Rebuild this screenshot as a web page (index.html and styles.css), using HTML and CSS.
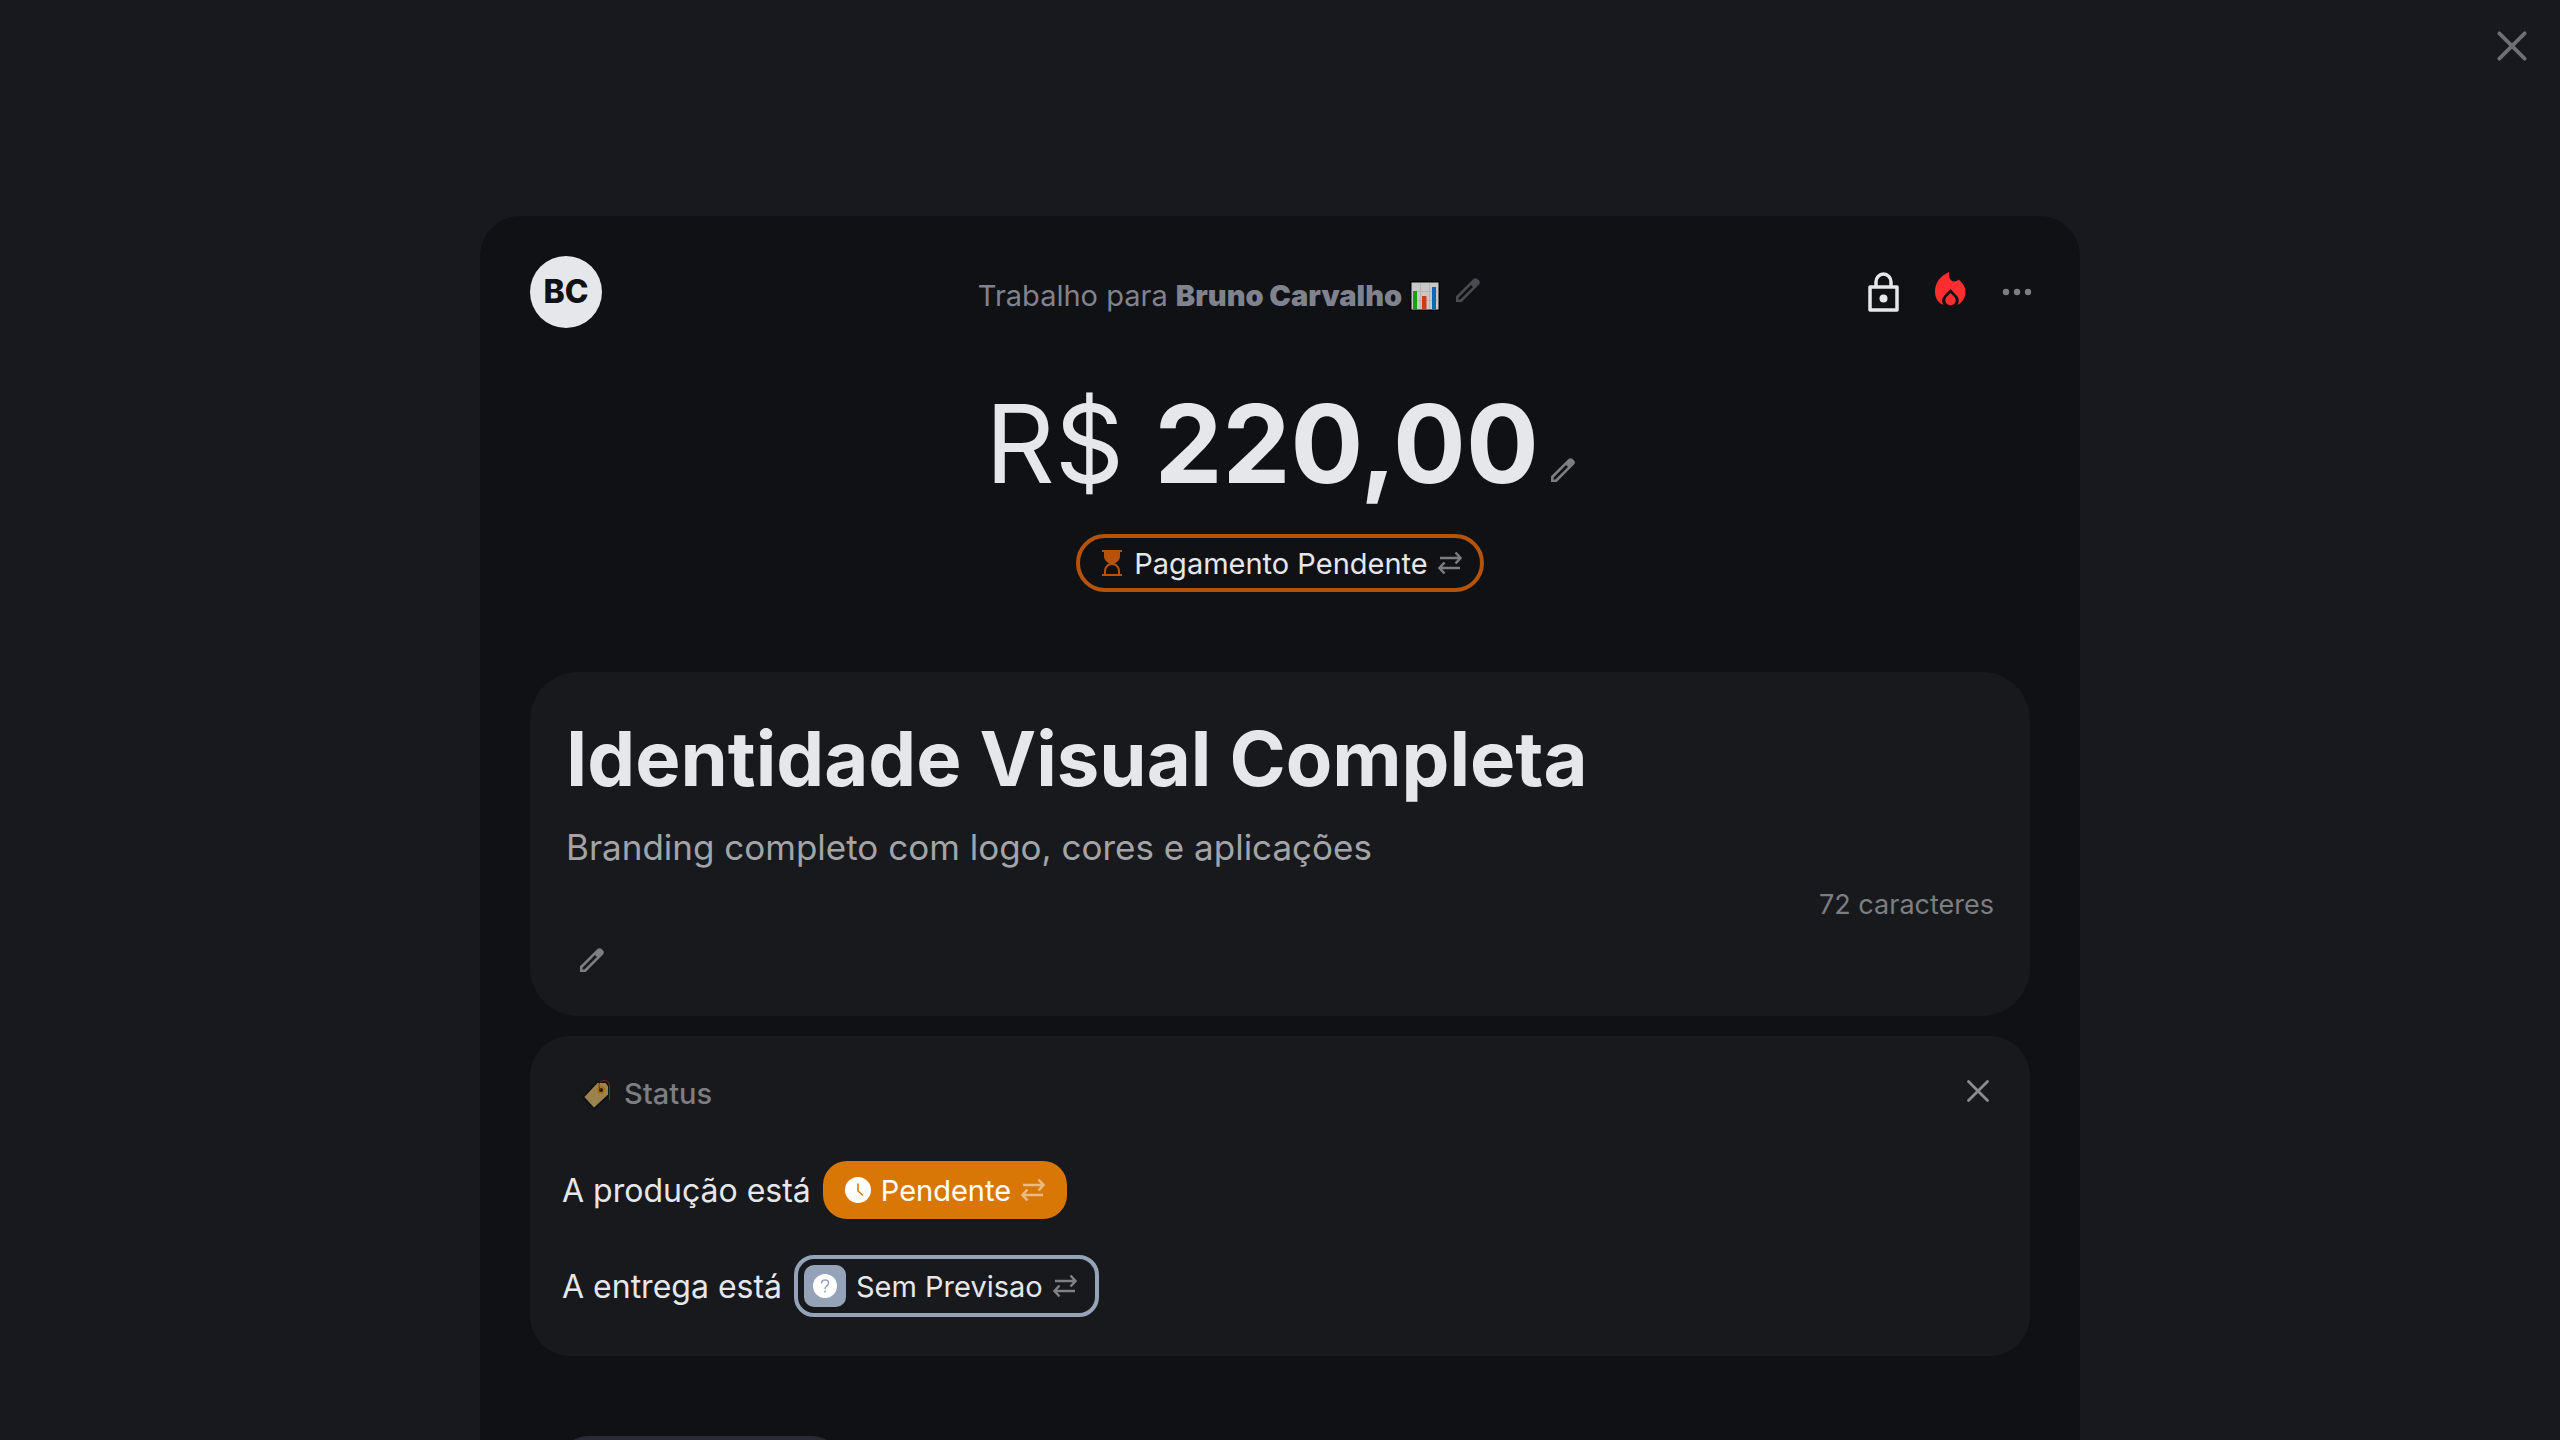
FILE: index.html
```html
<!DOCTYPE html>
<html lang="pt-BR">
<head>
  <meta charset="UTF-8" />
  <meta name="viewport" content="width=device-width, initial-scale=1.0"/>
  <title>Identidade Visual Completa</title>
  <link rel="stylesheet" href="styles.css">
</head>
<body>
  <!-- Shared icons -->
  <svg class="icon-defs" aria-hidden="true">
    <symbol id="icon-pencil" viewBox="0 0 24 24">
      <path fill="currentColor" fill-rule="evenodd" d="M0 24V18.300L17.500 1Q19.500 -.7 21.500 1L23 2.500Q24.700 4.500 23 6.500L5.700 24Z M2.500 21.500H4.300L17 9L15 7L2.500 19.700Z"/>
    </symbol>
    <symbol id="icon-swap" viewBox="0 0 24 24">
      <path fill="none" stroke="currentColor" stroke-width="2.500" d="M2 7H22 M17.500 1.500L22.500 7L17.500 12.500 M22 17H2 M6.500 11.500L1.500 17L6.500 22.500"/>
    </symbol>
    <symbol id="icon-x" viewBox="0 0 24 24">
      <path fill="none" stroke="currentColor" stroke-width="2.800" stroke-linecap="round" d="M2.500 2.500L21.500 21.500M21.500 2.500L2.500 21.500"/>
    </symbol>
  </svg>

  <button class="page-close" aria-label="Fechar"><svg><use href="#icon-x"/></svg></button>

  <main class="modal">
    <!-- Header -->
    <header class="modal-header">
      <div class="avatar">BC</div>
      <div class="client">
        <p>Trabalho para <strong>Bruno Carvalho</strong></p>
        <svg class="chart" viewBox="0 0 30 30">
          <path d="M0 0H30V30H0Z"/>
          <path fill="#c8c8c8" d="M1.500 1.500H28.500V28.500H1.500Z"/>
          <path stroke="#b4b4b4" d="M1.500 10.500H28.500M1.500 19.500H28.500M10.500 2V28M19.500 2V28"/>
          <path fill="#13a10e" d="M3 10H7V28.500H3Z"/>
          <path fill="#d03a1c" d="M12 15H16.500V28.500H12Z"/>
          <path fill="#0b68b8" d="M22 6H26V28.500H22Z"/>
        </svg>
        <button class="icon-button edit-client" aria-label="Editar cliente"><svg><use href="#icon-pencil"/></svg></button>
      </div>
      <div class="actions">
        <button class="icon-button lock" aria-label="Bloquear">
          <svg viewBox="0 0 31 40">
            <path fill="none" stroke="currentColor" stroke-width="3.500" stroke-linejoin="round" d="M2 15H29V38H2Z M8 15V10A7.500 8 0 0 1 23 10V15"/>
            <circle cx="15.500" cy="26.500" r="4" fill="currentColor"/>
          </svg>
        </button>
        <button class="icon-button fire" aria-label="Urgente">
          <svg viewBox="0 0 31 40">
            <path fill="currentColor" d="M14 0C14 3 14 9 19 9.500C21 9.700 23 8.500 23.500 7.500C28 11 30.500 15 30.500 20C30.500 26 27 31 22.500 33C24.500 29 24 26.500 22 24L15.500 17L9 24C6.500 27 6.500 30 8.500 33C3 31 0 26 0 19.500C0 11 5 4 14 0Z"/>
            <path fill="currentColor" d="M15.500 21L19.500 25C21 27 21 29 20 31A5.500 5.500 0 0 1 11 31C10 29 10 27 11.500 25Z"/>
          </svg>
        </button>
        <button class="icon-button more" aria-label="Mais opções">
          <svg viewBox="0 0 30 8" fill="currentColor"><circle cx="4" cy="4" r="3.200"/><circle cx="15" cy="4" r="3.200"/><circle cx="26" cy="4" r="3.200"/></svg>
        </button>
      </div>
    </header>

    <!-- Amount and payment state -->
    <section class="amount">
      <h1>R$ <strong>220,00</strong></h1>
      <button class="icon-button edit-amount" aria-label="Editar valor"><svg><use href="#icon-pencil"/></svg></button>
    </section>
    <div class="payment">
      <button class="pill pill-payment">
        <svg class="hourglass" viewBox="-2 0 24 26">
          <path fill="currentColor" d="M0 0H20V2H18V6C18 10 15 12.500 12 14H8C5 12.500 2 10 2 6V2H0ZM0 24H20V26H0Z"/>
          <path fill="none" stroke="currentColor" stroke-width="2" d="M3 24V21C3 17 6 14 10 14C14 14 17 17 17 21V24"/>
        </svg>
        Pagamento Pendente
        <svg class="swap"><use href="#icon-swap"/></svg>
      </button>
    </div>

    <!-- Job description -->
    <section class="card card-job">
      <h2>Identidade Visual Completa</h2>
      <p class="description">Branding completo com logo, cores e aplicações</p>
      <p class="counter">72 caracteres</p>
      <button class="icon-button edit-job" aria-label="Editar descrição"><svg><use href="#icon-pencil"/></svg></button>
    </section>

    <!-- Status -->
    <section class="card card-status">
      <div class="status-header">
        <h3>
          <svg class="tag" viewBox="0 0 30 32">
            <path fill="#9b8250" stroke="#111214" stroke-width="2" d="M1 19L15 4L24 4L27 8V17L13 30Q12 31 11 30Z"/>
            <circle cx="19" cy="12" r="4" fill="#a8720f"/>
            <circle cx="19" cy="12" r="2" fill="#1a1a1a"/>
            <path fill="none" stroke="#7d2a1c" stroke-width="1" d="M19 12C15 8 17 3 22 2.500C26 2.500 27.500 5 27.500 9V22"/>
          </svg>
          Status
        </h3>
        <button class="icon-button status-close" aria-label="Fechar status"><svg><use href="#icon-x"/></svg></button>
      </div>
      <div class="status-row">
        <span>A produção está</span>
        <button class="pill pill-production">
          <svg class="clock" viewBox="0 0 26 26">
            <circle cx="13" cy="13" r="13" fill="currentColor"/>
            <path fill="none" stroke="#d97706" stroke-width="1.600" stroke-linecap="round" d="M13 7V14L17.500 18"/>
          </svg>
          Pendente
          <svg class="swap"><use href="#icon-swap"/></svg>
        </button>
      </div>
      <div class="status-row">
        <span>A entrega está</span>
        <button class="pill pill-delivery">
          <span class="question">
            <svg viewBox="0 0 24 24">
              <circle cx="12" cy="12" r="12" fill="#fff"/>
              <path fill="none" stroke="#94a3b8" stroke-width="1.500" d="M8.500 9.500C8.500 7 10 6 12 6C14 6 15.500 7 15.500 9C15.500 11.500 12 12 12 15M12 16.500V18.500"/>
            </svg>
          </span>
          Sem Previsao
          <svg class="swap"><use href="#icon-swap"/></svg>
        </button>
      </div>
    </section>

    <section class="next-section">
      <div class="next-tab"></div>
    </section>
  </main>
</body>
</html>
```
FILE: styles.css
```css
* {
  box-sizing: border-box;
  margin: 0;
  padding: 0;
}
body {
  background-color: #18191e;
  font-family: Inter, "Liberation Sans", sans-serif;
  color: #e5e7eb;
  height: 100vh;
  overflow: hidden;
}
button {
  background: none;
  border: none;
  color: inherit;
  font: inherit;
  cursor: pointer;
}
svg {
  display: block;
  flex-shrink: 0;
}
.icon-defs {
  display: none;
}
.icon-button {
  display: flex;
  align-items: center;
  justify-content: center;
  color: #7d7e82;
}
.icon-button svg {
  width: 24px;
  height: 24px;
}
/*
  Close button in the page corner
*/
.page-close {
  position: absolute;
  top: 30px;
  right: 32px;
  color: #6f7074;
}
.page-close svg {
  width: 32px;
  height: 32px;
}
.modal {
  width: 100%;
  max-width: 1600px;
  margin: 216px auto 0;
  padding: 40px 50px;
  background-color: #101115;
  border-radius: 40px;
}
/*
  Header
*/
.modal-header {
  display: flex;
  justify-content: space-between;
  align-items: center;
}
.avatar {
  width: 72px;
  height: 72px;
  border-radius: 50%;
  background-color: #e5e7eb;
  color: #101115;
  font-size: 32px;
  font-weight: 800;
  line-height: 72px;
  text-align: center;
}
.client {
  display: flex;
  align-items: center;
  gap: 8px;
  font-size: 29px;
  line-height: 40px;
  padding: 8px 12px 0 0;
  color: #80838e;
}
.client strong {
  font-weight: 900;
}
.chart {
  width: 30px;
  height: 30px;
}
.edit-client {
  margin: -12px 0 0 8px;
  color: #494b50;
}
.actions {
  display: flex;
  align-items: center;
  gap: 36px;
  margin-right: -2px;
}
.lock {
  color: #e5e7eb;
}
.lock svg,
.fire svg {
  width: 31px;
  height: 40px;
}
.fire {
  color: #ff2d2d;
}
.more svg {
  width: 30px;
  height: 8px;
}
/*
  Amount
*/
.amount {
  display: flex;
  justify-content: center;
  align-items: flex-end;
  gap: 12px;
  margin-top: 48px;
}
.amount h1 {
  font-size: 108px;
  font-weight: 400;
  line-height: 136px;
}
.amount h1 strong {
  font-weight: 700;
}
.edit-amount {
  margin-bottom: 30px;
}
.payment {
  display: flex;
  justify-content: center;
  margin-top: 22px;
}
.pill {
  display: flex;
  align-items: center;
  gap: 10px;
  height: 58px;
  padding: 0 22px;
  font-size: 29px;
  font-weight: 400;
  border-radius: 24px;
}
.swap {
  width: 24px;
  height: 24px;
  opacity: 0.5;
}
.pill-payment {
  border: 4px solid #b45309;
  border-radius: 29px;
  padding: 0 18px 0 20px;
}
.hourglass {
  width: 24px;
  height: 26px;
  color: #b45309;
}
/*
  Cards
*/
.card {
  background-color: #18191d;
}
.card-job {
  margin-top: 80px;
  padding: 36px;
  border-radius: 48px;
}
.card-job h2 {
  font-size: 76px;
  font-weight: 700;
  line-height: 100px;
}
.description {
  margin-top: 12px;
  font-size: 35px;
  line-height: 54px;
  color: #a3a4a7;
}
.counter {
  font-size: 27px;
  line-height: 62px;
  text-align: right;
  color: #7d7e82;
}
.edit-job {
  margin: 12px 0 8px 14px;
}
.card-status {
  margin-top: 20px;
  padding: 36px 32px 40px;
  border-radius: 40px;
}
.status-header {
  display: flex;
  justify-content: space-between;
  align-items: flex-start;
  padding: 0 8px 0 20px;
}
.status-header h3 {
  display: flex;
  align-items: center;
  gap: 12px;
  font-size: 29px;
  font-weight: 500;
  line-height: 44px;
  color: #7d7e82;
}
.tag {
  width: 30px;
  height: 32px;
}
.status-close {
  height: 38px;
  color: #8c8d90;
}
.status-row {
  display: flex;
  align-items: center;
  gap: 12px;
  height: 60px;
  margin-top: 36px;
  font-size: 32px;
}
.status-header + .status-row {
  margin-top: 44px;
}
.pill-production {
  background-color: #d97706;
  color: #fff;
}
.clock {
  width: 26px;
  height: 26px;
}
.pill-delivery {
  height: 62px;
  padding: 0 18px 0 6px;
  border: 4px solid #94a3b8;
  border-radius: 20px;
}
.question {
  display: flex;
  align-items: center;
  justify-content: center;
  width: 42px;
  height: 42px;
  border-radius: 10px;
  background-color: #94a3b8;
}
.question svg {
  width: 24px;
  height: 24px;
}
.next-section {
  margin-top: 80px;
  padding: 0 20px;
}
.next-tab {
  width: 280px;
  height: 56px;
  margin-left: 10px;
  border-radius: 28px;
  background-color: #282b33;
}
```
